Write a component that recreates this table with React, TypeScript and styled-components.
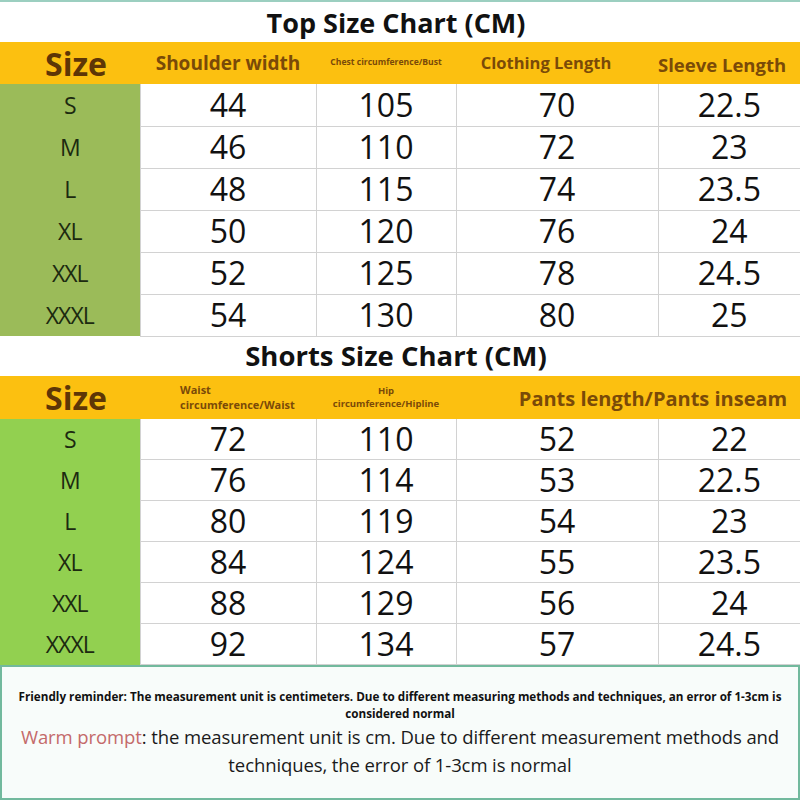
import styled, { createGlobalStyle } from 'styled-components';

const GlobalStyle = createGlobalStyle`
  html, body {
    margin: 0;
    padding: 0;
    background: #ffffff;
  }
  body {
    width: 800px;
    height: 800px;
    overflow: hidden;
    font-family: "Open Sans", "Liberation Sans", sans-serif;
  }
`;

const Page = styled.div`
  width: 800px;
  height: 800px;
  display: flex;
  flex-direction: column;
  border-top: 2px solid #9ccfc0;
  box-sizing: border-box;
`;

const Table = styled.table`
  width: 800px;
  border-collapse: collapse;
  table-layout: fixed;
`;

const TitleCell = styled.td<{ $h: number; $size: number }>`
  height: ${({ $h }) => $h}px;
  padding: 0 8px 0 0;
  text-align: center;
  font-size: ${({ $size }) => $size}px;
  line-height: 1;
  font-weight: 700;
  color: #111111;
`;

const HeadRow = styled.tr<{ $h: number }>`
  height: ${({ $h }) => $h}px;
  background: #fcc010;
`;

const HeadCell = styled.th<{ $size: number; $align?: string; $pad?: string }>`
  padding: ${({ $pad }) => $pad ?? '0'};
  font-size: ${({ $size }) => $size}px;
  line-height: 1.38;
  font-weight: 700;
  color: #7a4a08;
  text-align: ${({ $align }) => $align ?? 'center'};
  white-space: nowrap;
`;

const HeadLine = styled.span`
  display: block;
`;

const SizeHead = styled.th`
  padding: 2px 0 0 12px;
  font-size: 32px;
  line-height: 1;
  font-weight: 700;
  color: #5e3606;
  text-align: center;
`;

const BodyRow = styled.tr<{ $h: number }>`
  height: ${({ $h }) => $h}px;
`;

const SizeCell = styled.td<{ $bg: string }>`
  padding: 0;
  background: ${({ $bg }) => $bg};
  text-align: center;
  font-size: 23px;
  line-height: 1;
  color: #1c2a10;
  letter-spacing: -1px;
`;

const ValueCell = styled.td`
  padding: 0;
  text-align: center;
  font-size: 32px;
  color: #111111;
  border-left: 1px solid #d2d2d2;
  border-bottom: 1px solid #d2d2d2;
  line-height: 1;
`;

const Footer = styled.div`
  flex: 1;
  border: 2px solid #72b99d;
  background: #f8fcfa;
  display: flex;
  flex-direction: column;
  align-items: center;
  justify-content: center;
  text-align: center;
  padding: 6px 8px 4px;
`;

const Reminder = styled.p`
  margin: 0 0 2px;
  font-size: 11.7px;
  font-weight: 700;
  line-height: 1.38;
  color: #111111;
`;

const Prompt = styled.p`
  margin: 0;
  font-size: 18.5px;
  line-height: 28px;
  color: #1a1a1a;
  white-space: nowrap;
  letter-spacing: -0.1px;
`;

const TextLine = styled.span`
  display: block;
`;

const PromptLabel = styled.span`
  color: #c46a6a;
`;

const cols = [140, 176, 140, 202, 142];

const topRows = [
  ['S', '44', '105', '70', '22.5'],
  ['M', '46', '110', '72', '23'],
  ['L', '48', '115', '74', '23.5'],
  ['XL', '50', '120', '76', '24'],
  ['XXL', '52', '125', '78', '24.5'],
  ['XXXL', '54', '130', '80', '25'],
];

const shortRows = [
  ['S', '72', '110', '52', '22'],
  ['M', '76', '114', '53', '22.5'],
  ['L', '80', '119', '54', '23'],
  ['XL', '84', '124', '55', '23.5'],
  ['XXL', '88', '129', '56', '24'],
  ['XXXL', '92', '134', '57', '24.5'],
];

const ColGroup = () => (
  <colgroup>
    {cols.map((w, i) => (
      <col key={i} style={{ width: w }} />
    ))}
  </colgroup>
);

const App = () => {
  return (
    <>
      <GlobalStyle />
      <Page>
        <Table>
          <ColGroup />
          <tbody>
            <tr>
              <TitleCell colSpan={5} $h={40} $size={27}>Top Size Chart (CM)</TitleCell>
            </tr>
            <HeadRow $h={42}>
              <SizeHead>Size</SizeHead>
              <HeadCell $size={19}>Shoulder width</HeadCell>
              <HeadCell $size={8.6}>Chest circumference/Bust</HeadCell>
              <HeadCell $size={16.5} $pad="0 22px 0 0">Clothing Length</HeadCell>
              <HeadCell $size={18.5} $pad="4px 26px 0 0">Sleeve Length</HeadCell>
            </HeadRow>
            {topRows.map(([size, ...vals]) => (
              <BodyRow key={size} $h={42}>
                <SizeCell $bg="#9bbb59">{size}</SizeCell>
                {vals.map((v, i) => (
                  <ValueCell key={i}>{v}</ValueCell>
                ))}
              </BodyRow>
            ))}
            <tr>
              <TitleCell colSpan={5} $h={39} $size={27.5}>Shorts Size Chart (CM)</TitleCell>
            </tr>
            <HeadRow $h={43}>
              <SizeHead>Size</SizeHead>
              <HeadCell $size={11} $align="left" $pad="0 0 0 40px">
                <HeadLine>Waist</HeadLine>
                <HeadLine>circumference/Waist</HeadLine>
              </HeadCell>
              <HeadCell $size={9.5}>
                <HeadLine>Hip</HeadLine>
                <HeadLine>circumference/Hipline</HeadLine>
              </HeadCell>
              <HeadCell colSpan={2} $size={20} $pad="4px 0 0 50px">
                Pants length/Pants inseam
              </HeadCell>
            </HeadRow>
            {shortRows.map(([size, ...vals]) => (
              <BodyRow key={size} $h={41}>
                <SizeCell $bg="#92d050">{size}</SizeCell>
                {vals.map((v, i) => (
                  <ValueCell key={i}>{v}</ValueCell>
                ))}
              </BodyRow>
            ))}
          </tbody>
        </Table>
        <Footer>
          <Reminder>
            <TextLine>
              Friendly reminder: The measurement unit is centimeters. Due to different measuring methods and techniques, an error of 1-3cm is
            </TextLine>
            <TextLine>considered normal</TextLine>
          </Reminder>
          <Prompt>
            <TextLine>
              <PromptLabel>Warm prompt</PromptLabel>: the measurement unit is cm. Due to different measurement methods and
            </TextLine>
            <TextLine>techniques, the error of 1-3cm is normal</TextLine>
          </Prompt>
        </Footer>
      </Page>
    </>
  );
};

export default App;
